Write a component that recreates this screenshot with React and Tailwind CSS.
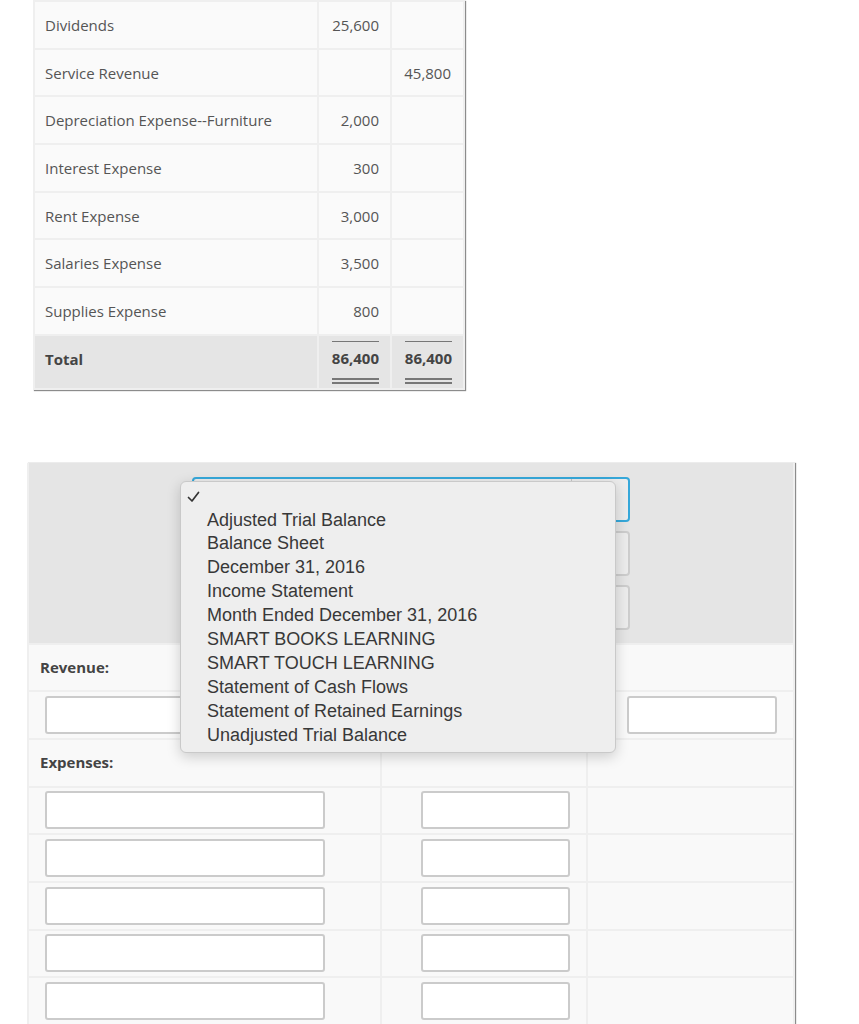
import React from "react";

const topRows = [
  ["Dividends", "25,600", ""],
  ["Service Revenue", "", "45,800"],
  ["Depreciation Expense--Furniture", "2,000", ""],
  ["Interest Expense", "300", ""],
  ["Rent Expense", "3,000", ""],
  ["Salaries Expense", "3,500", ""],
  ["Supplies Expense", "800", ""],
];

const menuItems = [
  "Adjusted Trial Balance",
  "Balance Sheet",
  "December 31, 2016",
  "Income Statement",
  "Month Ended December 31, 2016",
  "SMART BOOKS LEARNING",
  "SMART TOUCH LEARNING",
  "Statement of Cash Flows",
  "Statement of Retained Earnings",
  "Unadjusted Trial Balance",
];

const OS = { fontFamily: '"Open Sans", "Liberation Sans", sans-serif' };

function Input({ w }) {
  return <div className={`h-[38px] ${w} rounded-[3px] border-2 border-[#cbcbcb] bg-white`} />;
}

function TotalNum({ v }) {
  return (
    <div className="flex h-[52px] items-start justify-end bg-[#e5e5e5] pr-[11px] pt-[5px]">
      <div className="border-t border-[#777]">
        <div className="pt-[6px] text-[15px] font-bold leading-[21px] text-[#444]">{v}</div>
        <div className="mt-[9px] h-[2px] bg-[#777]" />
        <div className="mt-[2px] h-[2px] bg-[#777]" />
      </div>
    </div>
  );
}

function Select({ active }) {
  return (
    <div
      className={`flex h-[45px] w-[438px] rounded-[4px] border-2 bg-[#ececec] ${
        active ? "border-[#36a8da]" : "border-[#cdcdcd]"
      }`}
    >
      <div className="flex-1" />
      <div className="w-[57px] border-l border-[#c4c4c4]" />
    </div>
  );
}

export default function App() {
  return (
    <div className="relative h-[1024px] w-[859px] overflow-hidden bg-white" style={OS}>
      {/* Top table */}
      <div className="ml-[33px] grid w-[432px] grid-cols-[282px_71px_71px] gap-[2px] bg-[#efefef] p-[2px] shadow-[1px_1px_1px_rgba(0,0,0,0.45)]">
        {topRows.map(([label, d, c]) => (
          <React.Fragment key={label}>
            <div className="flex h-[45.67px] items-center bg-[#fafafa] pl-[10px] pt-[1px] text-[15px] text-[#555]">
              {label}
            </div>
            <div className="flex h-[45.67px] items-center justify-end bg-[#fafafa] pr-[11px] pt-[1px] text-[15px] text-[#555]">
              {d}
            </div>
            <div className="flex h-[45.67px] items-center justify-end bg-[#fafafa] pr-[12px] pt-[1px] text-[15px] text-[#555]">
              {c}
            </div>
          </React.Fragment>
        ))}
        <div className="h-[52px] bg-[#e5e5e5] pl-[10px] pt-[13px] text-[15px] font-bold leading-[21px] text-[#444]">
          Total
        </div>
        <TotalNum v="86,400" />
        <TotalNum v="86,400" />
      </div>

      {/* Bottom section */}
      <div className="relative ml-[27px] mt-[73px] w-[768px] bg-[#efefef] px-[2px] shadow-[1px_0px_1px_rgba(0,0,0,0.45)]">
        <div className="flex h-[180px] flex-col gap-[9px] bg-[#e5e5e5] pl-[163px] pt-[14px]">
          <Select active />
          <Select />
          <Select />
        </div>
        <div className="grid grid-cols-[351px_204px_205px] gap-[2px] pt-[2px]">
          <div className="flex h-[45.67px] items-center bg-[#f9f9f9] pl-[11px] text-[15px] font-bold text-[#444]">
            Revenue:
          </div>
          <div className="h-[45.67px] bg-[#f9f9f9]" />
          <div className="h-[45.67px] bg-[#f9f9f9]" />

          <div className="flex h-[45.67px] items-center bg-[#f9f9f9] pl-[16px]">
            <Input w="w-[280px]" />
          </div>
          <div className="flex h-[45.67px] items-center justify-end bg-[#f9f9f9] pr-[16px]">
            <Input w="w-[149px]" />
          </div>
          <div className="flex h-[45.67px] items-center justify-end bg-[#f9f9f9] pr-[16px]">
            <Input w="w-[150px]" />
          </div>

          <div className="flex h-[45.67px] items-center bg-[#f9f9f9] pl-[11px] text-[15px] font-bold text-[#444]">
            Expenses:
          </div>
          <div className="h-[45.67px] bg-[#f9f9f9]" />
          <div className="h-[45.67px] bg-[#f9f9f9]" />

          {[0, 1, 2, 3, 4].map((i) => (
            <React.Fragment key={i}>
              <div className="flex h-[45.67px] items-center bg-[#f9f9f9] pl-[16px]">
                <Input w="w-[280px]" />
              </div>
              <div className="flex h-[45.67px] items-center justify-end bg-[#f9f9f9] pr-[16px]">
                <Input w="w-[149px]" />
              </div>
              <div className="h-[45.67px] bg-[#f9f9f9]" />
            </React.Fragment>
          ))}
        </div>

        {/* Open dropdown menu */}
        <div
          className="absolute left-[153px] top-[18px] w-[436px] rounded-[6px] border border-[#c9c9c9] bg-[#eeeeee] pb-[4px] pt-[3px] shadow-[0_4px_14px_rgba(0,0,0,0.18)]"
          style={{ fontFamily: '"Liberation Sans", Arial, sans-serif' }}
        >
          <div className="relative h-[24px]">
            <svg
              className="absolute left-[6px] top-[6px]"
              width="13"
              height="12"
              viewBox="0 0 13 12"
              fill="none"
            >
              <path d="M1.5 6.5 L5 10 L11.5 1.5" stroke="#333" strokeWidth="1.7" strokeLinecap="round" strokeLinejoin="round" />
            </svg>
          </div>
          {menuItems.map((m) => (
            <div key={m} className="h-[23.9px] pl-[26px] text-[18px] leading-[23.9px] text-[#383838]">
              {m}
            </div>
          ))}
        </div>
      </div>
    </div>
  );
}
